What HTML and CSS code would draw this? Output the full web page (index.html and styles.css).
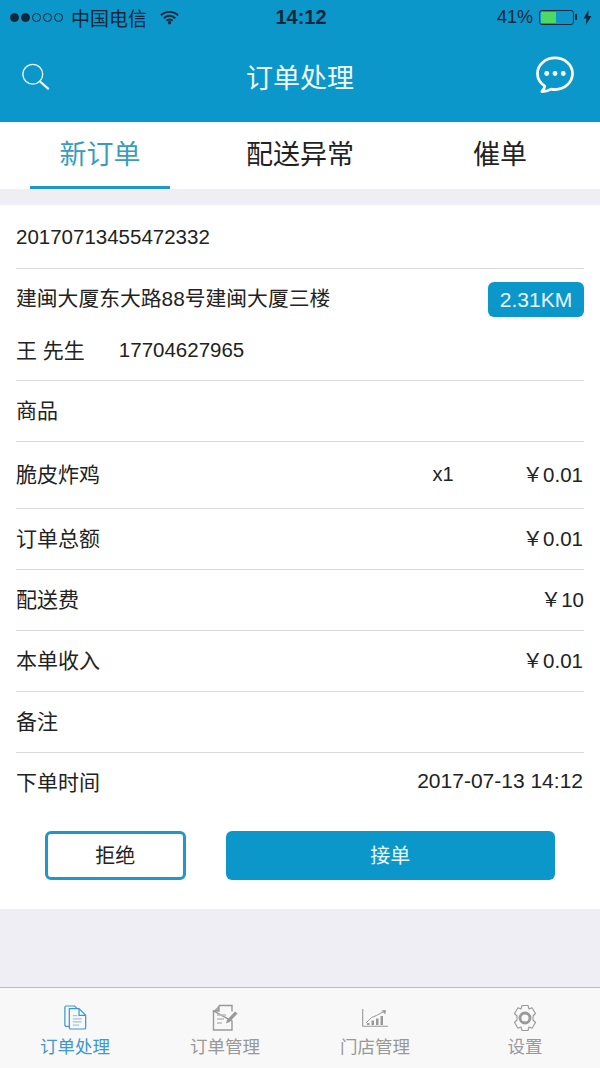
FILE: index.html
```html
<!DOCTYPE html>
<html lang="zh-CN">

<head>
    <meta charset="UTF-8">
    <meta name="viewport" content="width=device-width, initial-scale=1.0">
    <title>订单处理</title>
    <link rel="stylesheet" href="styles.css">
</head>

<body>
    <header class="top">
        <div class="status">
            <div class="status-left">
                <span class="signal">
                    <i class="dot on"></i><i class="dot on"></i><i class="dot"></i><i class="dot"></i><i class="dot"></i>
                </span>
                <span class="carrier">中国电信</span>
                <svg class="wifi" width="19" height="15" viewBox="0 0 20 15">
                    <path d="M1 5.200a13 13 0 0 1 18 0M4 8.200a8.600 8.600 0 0 1 12 0M6.800 11a4.500 4.500 0 0 1 6.400 0" fill="none" stroke="#10283c" stroke-width="2.100"/>
                    <circle cx="10" cy="13" r="1.800" fill="#10283c"/>
                </svg>
            </div>
            <div class="clock">14:12</div>
            <div class="status-right">
                <span class="percent">41%</span>
                <span class="battery"><span class="battery-fill"></span></span>
                <span class="battery-tip"></span>
                <svg width="9" height="15" viewBox="0 0 9 15"><path d="M5.500 0 0.500 8.500h3L2.800 15 8.500 6h-3.200z" fill="#10283c"/></svg>
            </div>
        </div>
        <div class="navbar">
            <div class="nav-side">
                <svg class="nav-search" width="29" height="27" viewBox="0 0 32 30">
                    <circle cx="13" cy="12.500" r="11" fill="none" stroke="#e8f6fb" stroke-width="1.500"/>
                    <path d="M21 20.500 30 28.500" fill="none" stroke="#e8f6fb" stroke-width="2.400" stroke-linecap="round"/>
                </svg>
            </div>
            <h1>订单处理</h1>
            <div class="nav-side nav-side-right">
                <svg class="nav-chat" width="40" height="37" viewBox="0 0 40 38">
                    <path d="M20 2C10 2 2 9 2 18c0 5.500 3 10 7.500 13-.3 2-1.500 4-3 5.500 3.500 0 7-1 9.500-2.500 1.300.3 2.700.5 4 .5 10 0 18-7.500 18-16.500S30 2 20 2z" fill="none" stroke="#fff" stroke-width="2.800" stroke-linejoin="round"/>
                    <circle cx="11.500" cy="18" r="2.500" fill="#fff"/>
                    <circle cx="20" cy="18" r="2.500" fill="#fff"/>
                    <circle cx="28.500" cy="18" r="2.500" fill="#fff"/>
                </svg>
            </div>
        </div>
    </header>

    <nav class="tabs">
        <div class="tab active">新订单</div>
        <div class="tab">配送异常</div>
        <div class="tab">催单</div>
    </nav>

    <main class="order">
        <div class="row row-no">20170713455472332</div>
        <div class="row-address">
            <div class="address-line">
                <span class="address">建闽大厦东大路88号建闽大厦三楼</span>
                <span class="distance">2.31KM</span>
            </div>
            <div class="contact">
                <span>王 先生</span>
                <span class="phone">17704627965</span>
            </div>
        </div>
        <div class="row">商品</div>
        <div class="row row-item">
            <span class="item-name">脆皮炸鸡</span>
            <span class="item-qty">x1</span>
            <span class="money">￥0.01</span>
        </div>
        <div class="row"><span>订单总额</span><span class="money">￥0.01</span></div>
        <div class="row"><span>配送费</span><span class="money money-end">￥10</span></div>
        <div class="row"><span>本单收入</span><span class="money">￥0.01</span></div>
        <div class="row">备注</div>
        <div class="row row-last"><span>下单时间</span><span class="money time">2017-07-13 14:12</span></div>
        <div class="actions">
            <button class="btn-reject">拒绝</button>
            <button class="btn-accept">接单</button>
        </div>
    </main>

    <footer class="tabbar">
        <div class="tabbar-item current">
            <svg class="icon-orders" width="23" height="25" viewBox="0 0 26 28" fill="none" stroke="#3f97cf" stroke-width="1.400">
                <path d="M6 24H2.500a1.500 1.500 0 0 1-1.500-1.500V2.500A1.500 1.500 0 0 1 2.500 1H12l3 3"/>
                <path d="M6 4h11l7.500 7.500v14A1.500 1.500 0 0 1 23 27H7.500A1.500 1.500 0 0 1 6 25.500z"/>
                <path d="M17 4v7.500h7.500"/>
                <path d="M10 12h5M10 15.500h10M10 19h10M10 22.500h7" stroke="#9cc5e2"/>
            </svg>
            <span>订单处理</span>
        </div>
        <div class="tabbar-item">
            <svg width="26" height="28" viewBox="0 0 26 28" fill="none" stroke="#999" stroke-width="1.400">
                <path d="M7 1.500h13v6M20 17v9H1.500V7z"/>
                <path d="M7 1.500V7H1.500" fill="#aaa"/>
                <path d="M5 11h9M5 15h7M5 19h5" stroke="#bbb"/>
                <path d="M14 19.500l1-3.500 8-8.500 2.500 2-8 8.500z" fill="#999" stroke="none"/>
            </svg>
            <span>订单管理</span>
        </div>
        <div class="tabbar-item">
            <svg class="chart" width="26" height="18" viewBox="0 0 26 18" fill="none" stroke="#999">
                <path d="M.700 0v17.300H26" stroke-width="1.100"/>
                <path d="M4 14 9.500 8.500l5-2L21 3" stroke-width="1"/>
                <path d="M19.500 1.500 24 1l-.8 4.500z" fill="#999" stroke="none"/>
                <path d="M5 16h2.500v-2H5zM9.500 16H12v-4.500H9.500zM14 16h2.500V9.500H14zM18.500 16H21V7h-2.500z" fill="#999" stroke="none"/>
            </svg>
            <span>门店管理</span>
        </div>
        <div class="tabbar-item">
            <svg width="26" height="28" viewBox="0 0 26 28" fill="none" stroke="#999">
                <path d="M10 1.500h6l1 3.500 3-1.200 3.500 5.700-2.500 2.500v4l2.500 2.500-3.500 5.700-3-1.200-1 3.500h-6l-1-3.500-3 1.200L2.500 18.500 5 16v-4L2.500 9.500 6 3.800l3 1.200z" stroke-width="1.100" stroke-linejoin="round"/>
                <circle cx="13" cy="14" r="5" stroke-width="2.800"/>
            </svg>
            <span>设置</span>
        </div>
    </footer>
</body>

</html>
```

FILE: styles.css
```css
* {
    box-sizing: border-box;
}

body {
    font-family: "Liberation Sans", "Noto Sans CJK SC", sans-serif;
    margin: 0;
    height: 1068px;
    overflow: hidden;
    background-color: #eeeef4;
    color: #222;
    display: flex;
    flex-direction: column;
}

.top {
    background-color: #0c97cb;
    height: 122px;
}

.status {
    height: 34px;
    padding: 0 8px 0 10px;
    display: flex;
    justify-content: space-between;
    align-items: center;
    color: #10283c;
    font-size: 19px;
}

.status-left,
.status-right {
    width: 200px;
    display: flex;
    align-items: center;
}

.status-right {
    justify-content: flex-end;
}

.percent {
    font-size: 18px;
}

.signal {
    display: flex;
    gap: 2px;
}

.dot {
    width: 9px;
    height: 9px;
    border: 1px solid #10283c;
    border-radius: 50%;
}

.dot.on {
    background-color: #10283c;
}

.carrier {
    margin-left: 8px;
}

.wifi {
    margin-left: 13px;
}

.clock {
    font-size: 20px;
    font-weight: bold;
}

.battery {
    width: 35px;
    height: 15px;
    margin-left: 6px;
    border: 1px solid #10283c;
    border-radius: 3px;
    padding: 1px;
}

.battery-fill {
    display: block;
    width: 15px;
    height: 100%;
    background-color: #4cd964;
}

.battery-tip {
    width: 2px;
    height: 6px;
    margin: 0 6px 0 1px;
    background-color: #10283c;
}

.navbar {
    height: 88px;
    padding: 6px 23px 9px;
    display: flex;
    align-items: center;
}

.nav-side {
    flex: 1;
    display: flex;
}

.nav-side-right {
    justify-content: flex-end;
}

.nav-search {
    margin-left: -2px;
}

.nav-chat {
    margin: -4px 2px 0 0;
}

.navbar h1 {
    margin: 0;
    color: #eef9fd;
    font-size: 27px;
    font-weight: normal;
}

.tabs {
    height: 67px;
    background-color: white;
    display: flex;
}

.tab {
    flex: none;
    width: 200px;
    display: flex;
    justify-content: center;
    align-items: center;
    padding-bottom: 6px;
    font-size: 27px;
    color: #222;
}

.tab.active {
    width: 140px;
    margin: 0 30px;
    color: #3a9cbc;
    border-bottom: 3px solid #1f98c8;
    padding-bottom: 3px;
}

.order {
    margin-top: 16px;
    height: 704px;
    background-color: white;
    padding: 0 16px;
    font-size: 21px;
}

.row {
    height: 61px;
    padding-bottom: 4px;
    border-bottom: 1px solid #d9d9d9;
    display: flex;
    justify-content: space-between;
    align-items: center;
}

.row-no {
    height: 64px;
    padding-bottom: 0;
    font-size: 20.500px;
}

.row-address {
    height: 112px;
    border-bottom: 1px solid #d9d9d9;
}

.address-line {
    height: 55px;
    display: flex;
    justify-content: space-between;
    align-items: center;
}

.address {
    font-size: 20.800px;
}

.distance {
    width: 96px;
    height: 35px;
    margin-top: 6px;
    background-color: #0c97cb;
    color: #e8f7fc;
    border-radius: 6px;
    text-align: center;
    line-height: 35px;
}

.contact {
    height: 50px;
    display: flex;
    align-items: center;
    gap: 34px;
}

.phone {
    margin-top: 1px;
    font-size: 20.500px;
}

.row-item {
    height: 67px;
}

.item-name {
    flex: 1;
}

.item-qty {
    margin: 2px 69px 0 0;
    font-size: 20px;
}

.money {
    font-size: 20.500px;
    margin-right: 1px;
}

.money-end {
    margin-right: 0;
}

.time {
    font-size: 21px;
}

.row-last {
    border-bottom: none;
    padding-bottom: 5px;
}

.actions {
    display: flex;
    gap: 40px;
    padding: 17px 29px 0;
}

button {
    height: 49px;
    border-radius: 6px;
    font-family: inherit;
    font-size: 20px;
    padding: 0 0 2px;
    cursor: pointer;
}

.btn-reject {
    width: 141px;
    background: white;
    border: 3px solid #1f98c8;
    color: #222;
}

.btn-accept {
    width: 330px;
    background-color: #0c97cb;
    border: none;
    color: #e8f7fc;
}

.tabbar {
    margin-top: 78px;
    height: 81px;
    border-top: 1px solid #bdbdbd;
    background-color: #f8f8f8;
    display: flex;
}

.tabbar-item {
    width: 150px;
    padding-top: 16px;
    display: flex;
    flex-direction: column;
    align-items: center;
    gap: 1px;
    font-size: 17.500px;
    color: #999;
}

.tabbar-item .chart {
    margin: 5px 0;
}

.tabbar-item .icon-orders {
    margin: 1px 0 2px;
}

.tabbar-item.current {
    color: #3f97cf;
}
```
